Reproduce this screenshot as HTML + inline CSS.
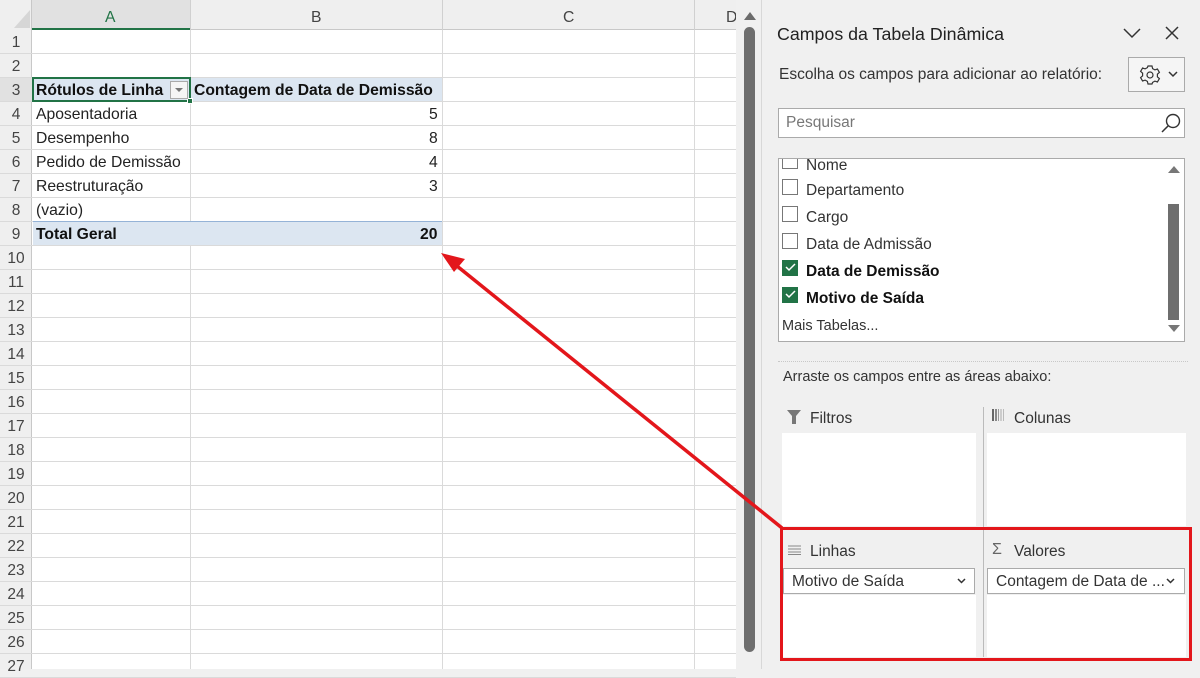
<!DOCTYPE html>
<html><head><meta charset="utf-8"><style>
*{margin:0;padding:0;box-sizing:border-box}
body{width:1200px;height:669px;overflow:hidden;background:#f0f0f0;font-family:"Liberation Sans",sans-serif;position:relative;color:#222}
.abs{position:absolute}
.t{position:absolute;font-size:15.7px;white-space:nowrap}
.hl{position:absolute;left:0;width:736px;height:1px;background:#dadada}
.vl{position:absolute;top:30px;width:1px;height:639px;background:#dadada}
.rn{position:absolute;left:0;width:32px;text-align:center;font-size:15.5px;color:#444}
.cb{position:absolute;left:782px;width:16px;height:16px;border:1px solid #777;background:#fff}
.ck{position:absolute;left:782px;width:16px;height:16px;background:#217346}
.pt{position:absolute;font-size:15.5px;color:#333;white-space:nowrap}
</style></head><body>
<div class="abs" style="left:0;top:0;width:736px;height:669px;background:#fff"></div>
<div class="abs" style="left:0;top:0;width:736px;height:30px;background:#efefef;border-bottom:1px solid #c8c8c8"></div>
<div class="abs" style="left:0;top:0;width:32px;height:669px;background:#efefef;border-right:1px solid #c8c8c8"></div>
<div class="abs" style="left:32px;top:0;width:158px;height:30px;background:#e1e1e1;border-bottom:2px solid #217346"></div>
<div class="abs" style="left:0;top:78px;width:32px;height:24px;background:#e1e1e1"></div>
<svg class="abs" style="left:14px;top:10px" width="16" height="18"><polygon points="16,0 16,18 0,18" fill="#d6d6d6"/></svg>
<div class="t" style="left:105px;top:9px;color:#217346">A</div>
<div class="t" style="left:311px;top:9px;color:#444">B</div>
<div class="t" style="left:563px;top:9px;color:#444">C</div>
<div class="t" style="left:726px;top:9px;color:#444">D</div>
<div class="vl" style="left:190px"></div><div class="vl" style="left:442px"></div><div class="vl" style="left:694px"></div>
<div class="abs" style="left:190px;top:0;width:1px;height:30px;background:#d0d0d0"></div>
<div class="abs" style="left:442px;top:0;width:1px;height:30px;background:#d0d0d0"></div>
<div class="abs" style="left:694px;top:0;width:1px;height:30px;background:#d0d0d0"></div>
<div id="rows"></div>
<script>
let h='';for(let i=1;i<=27;i++){let top=30+(i-1)*24;h+=`<div class="hl" style="top:${top+23}px"></div><div class="rn" style="top:${top+4}px">${i}</div>`;}
document.getElementById('rows').innerHTML=h;
</script>
<div class="abs" style="left:33px;top:78px;width:409px;height:23px;background:#dce6f1"></div>
<div class="abs" style="left:33px;top:221px;width:409px;height:24px;background:#dce6f1;border-top:1px solid #95b3d7"></div>
<div class="abs" style="left:32px;top:77px;width:159px;height:25px;border:2px solid #217346"></div>
<div class="abs" style="left:187px;top:98px;width:6px;height:6px;background:#217346;border:1px solid #fff"></div>
<div class="abs" style="left:170px;top:81px;width:18px;height:18px;border:1px solid #aaa;background:#f5f5f5"></div>
<svg class="abs" style="left:175px;top:88px" width="8" height="5"><polygon points="0,0 8,0 4,4" fill="#777"/></svg>
<div class="t" style="left:36px;top:82px;font-weight:bold;color:#111">Rótulos de Linha</div>
<div class="t" style="left:194px;top:82px;font-weight:bold;color:#111">Contagem de Data de Demissão</div>
<div class="t" style="left:36px;top:106px">Aposentadoria</div><div class="t" style="left:429px;top:106px">5</div>
<div class="t" style="left:36px;top:130px">Desempenho</div><div class="t" style="left:429px;top:130px">8</div>
<div class="t" style="left:36px;top:154px">Pedido de Demissão</div><div class="t" style="left:429px;top:154px">4</div>
<div class="t" style="left:36px;top:178px">Reestruturação</div><div class="t" style="left:429px;top:178px">3</div>
<div class="t" style="left:36px;top:202px">(vazio)</div>
<div class="t" style="left:36px;top:226px;font-weight:bold;color:#111">Total Geral</div><div class="t" style="left:420px;top:226px;font-weight:bold;color:#111">20</div>
<div class="abs" style="left:736px;top:0;width:26px;height:669px;background:#f0f0f0;border-right:1px solid #d8d8d8"></div>
<svg class="abs" style="left:744px;top:12px" width="12" height="8"><polygon points="0,8 12,8 6,0" fill="#6b6b6b"/></svg>
<div class="abs" style="left:744px;top:27px;width:11px;height:625px;background:#6e6e6e;border-radius:6px"></div>
<div class="t" style="left:777px;top:24px;font-size:17.8px;color:#222">Campos da Tabela Dinâmica</div>
<svg class="abs" style="left:1122px;top:26px" width="20" height="14"><path d="M2 3 L10 11 L18 3" stroke="#333" stroke-width="1.5" fill="none"/></svg>
<svg class="abs" style="left:1164px;top:25px" width="16" height="16"><path d="M2 2 L14 14 M14 2 L2 14" stroke="#333" stroke-width="1.5"/></svg>
<div class="pt" style="left:779px;top:66px">Escolha os campos para adicionar ao relatório:</div>
<div class="abs" style="left:1128px;top:57px;width:57px;height:35px;border:1px solid #aaa;background:#f5f5f5"></div>
<svg class="abs" style="left:1139px;top:64px" width="22" height="22" viewBox="0 0 22 22"><path d="M9 2h4l.6 2.6 2.3 1.3 2.5-.9 2 3.4-2 1.8v2.6l2 1.8-2 3.4-2.5-.9-2.3 1.3L13 20H9l-.6-2.6-2.3-1.3-2.5.9-2-3.4 2-1.8V9.2l-2-1.8 2-3.4 2.5.9 2.3-1.3z" fill="none" stroke="#333" stroke-width="1.2"/><circle cx="11" cy="11" r="3" fill="none" stroke="#333" stroke-width="1.2"/></svg>
<svg class="abs" style="left:1168px;top:71px" width="10" height="7"><path d="M1 1 L5 5 L9 1" stroke="#333" stroke-width="1.5" fill="none"/></svg>
<div class="abs" style="left:778px;top:108px;width:407px;height:30px;border:1px solid #aaa;background:#fff"></div>
<div class="pt" style="left:786px;top:114px;color:#777">Pesquisar</div>
<svg class="abs" style="left:1159px;top:112px" width="24" height="22"><circle cx="14" cy="9" r="6.5" fill="none" stroke="#333" stroke-width="1.4"/><path d="M9.5 13.5 L3 20" stroke="#333" stroke-width="1.5"/></svg>
<div class="abs" style="left:778px;top:158px;width:407px;height:184px;border:1px solid #aaa;background:#fff;overflow:hidden">
 <div class="abs" style="left:3px;top:-6px;width:16px;height:16px;border:1px solid #777"></div>
 <div class="pt" style="left:27px;top:-2px">Nome</div>
</div>
<div class="cb" style="top:179px"></div><div class="pt" style="left:806px;top:182px">Departamento</div>
<div class="cb" style="top:206px"></div><div class="pt" style="left:806px;top:209px">Cargo</div>
<div class="cb" style="top:233px"></div><div class="pt" style="left:806px;top:236px">Data de Admissão</div>
<div class="ck" style="top:260px"></div><svg class="abs" style="left:785px;top:263px" width="11" height="9"><path d="M1 4 L4 7 L10 1" stroke="#fff" stroke-width="1.5" fill="none"/></svg><div class="pt" style="left:806px;top:263px;font-weight:bold;color:#111">Data de Demissão</div>
<div class="ck" style="top:287px"></div><svg class="abs" style="left:785px;top:290px" width="11" height="9"><path d="M1 4 L4 7 L10 1" stroke="#fff" stroke-width="1.5" fill="none"/></svg><div class="pt" style="left:806px;top:290px;font-weight:bold;color:#111">Motivo de Saída</div>
<div class="pt" style="left:782px;top:318px;font-size:14.5px">Mais Tabelas...</div>
<svg class="abs" style="left:1168px;top:165px" width="12" height="8"><polygon points="0,8 12,8 6,1" fill="#777"/></svg>
<div class="abs" style="left:1168px;top:204px;width:11px;height:116px;background:#6e6e6e"></div>
<svg class="abs" style="left:1168px;top:325px" width="12" height="8"><polygon points="0,0 12,0 6,7" fill="#777"/></svg>
<div class="abs" style="left:778px;top:361px;width:410px;border-top:1px dotted #c8c8c8"></div>
<div class="pt" style="left:783px;top:369px;font-size:14.5px">Arraste os campos entre as áreas abaixo:</div>
<svg class="abs" style="left:787px;top:410px" width="14" height="14"><polygon points="0,0 14,0 9,6 9,14 5,14 5,6" fill="#777"/></svg>
<div class="pt" style="left:810px;top:410px">Filtros</div>
<svg class="abs" style="left:992px;top:409px" width="12" height="12"><rect x="0" y="0" width="2" height="12" fill="#666"/><rect x="3" y="0" width="2" height="12" fill="#888"/><rect x="6" y="0" width="1" height="12" fill="#999"/><rect x="8.5" y="0" width="1" height="12" fill="#aaa"/><rect x="11" y="0" width="1" height="12" fill="#bbb"/></svg>
<div class="pt" style="left:1014px;top:410px">Colunas</div>
<div class="abs" style="left:782px;top:433px;width:194px;height:93px;background:#fff"></div>
<div class="abs" style="left:987px;top:433px;width:199px;height:93px;background:#fff"></div>
<div class="abs" style="left:983px;top:407px;width:1px;height:250px;background:#bbb"></div>
<svg class="abs" style="left:788px;top:545px" width="13" height="10"><path d="M0 1H13M0 4H13M0 7H13M0 9.5H13" stroke="#888" stroke-width="1"/></svg>
<div class="pt" style="left:810px;top:543px">Linhas</div>
<div class="pt" style="left:992px;top:541px;font-size:16px;color:#666">Σ</div>
<div class="pt" style="left:1014px;top:543px">Valores</div>
<div class="abs" style="left:782px;top:595px;width:194px;height:62px;background:#fff"></div>
<div class="abs" style="left:987px;top:595px;width:199px;height:62px;background:#fff"></div>
<div class="abs" style="left:783px;top:568px;width:192px;height:26px;border:1px solid #aaa;background:#fff"></div>
<div class="pt" style="left:792px;top:573px">Motivo de Saída</div>
<svg class="abs" style="left:957px;top:578px" width="9" height="6"><path d="M1 1 L4.5 4.5 L8 1" stroke="#333" stroke-width="1.5" fill="none"/></svg>
<div class="abs" style="left:987px;top:568px;width:198px;height:26px;border:1px solid #aaa;background:#fff"></div>
<div class="pt" style="left:996px;top:573px">Contagem de Data de ...</div>
<svg class="abs" style="left:1166px;top:578px" width="9" height="6"><path d="M1 1 L4.5 4.5 L8 1" stroke="#333" stroke-width="1.5" fill="none"/></svg>
<div class="abs" style="left:780px;top:527px;width:412px;height:134px;border:3px solid #e3161b"></div>
<svg class="abs" style="left:0;top:0" width="1200" height="669"><line x1="782" y1="528" x2="452" y2="262" stroke="#e3161b" stroke-width="3.5"/><polygon points="441,253 465,259 454,272" fill="#e3161b"/></svg>
</body></html>
